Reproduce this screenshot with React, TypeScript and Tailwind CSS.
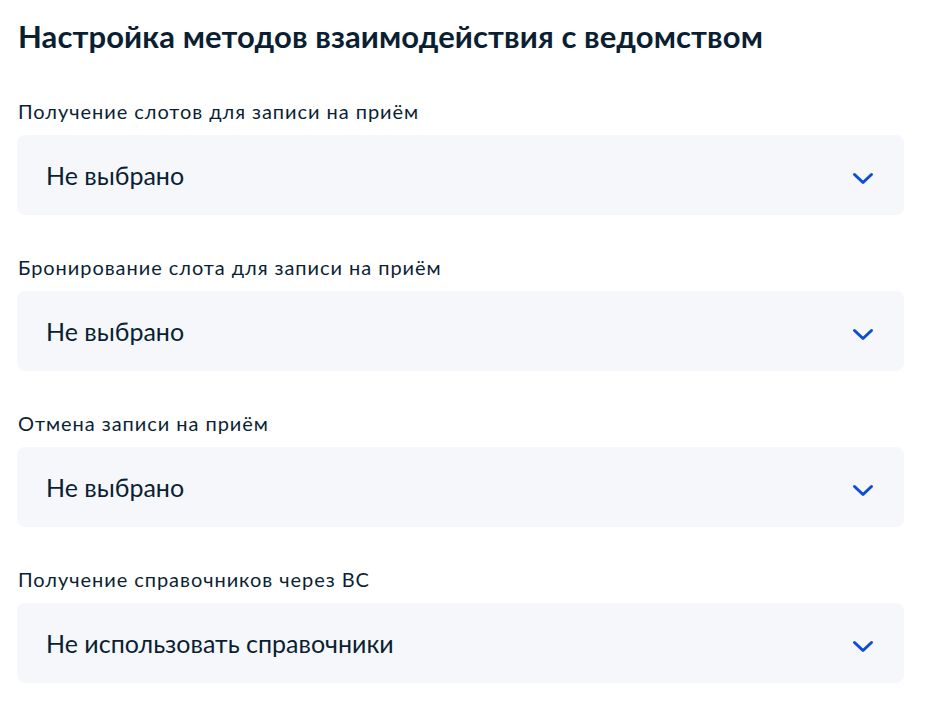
const fields = [
  { label: "Получение слотов для записи на приём", value: "Не выбрано" },
  { label: "Бронирование слота для записи на приём", value: "Не выбрано" },
  { label: "Отмена записи на приём", value: "Не выбрано" },
  { label: "Получение справочников через ВС", value: "Не использовать справочники" },
];

function Chevron() {
  return (
    <svg width="22" height="14" viewBox="0 0 22 14" fill="none">
      <path
        d="M2.5 2.5 L11 10.5 L19.5 2.5"
        stroke="#0d4cd3"
        strokeWidth="3"
        strokeLinecap="round"
        strokeLinejoin="round"
      />
    </svg>
  );
}

export default function App() {
  return (
    <div className="min-h-[708px] bg-white pl-[17px] pr-[30px] pt-[16px] text-[#0b1f33] font-['Lato',_'Noto_Sans',_sans-serif]">
      <h1 className="text-[31px] font-bold leading-[40px] tracking-[0.1px] pl-[1px]">
        Настройка методов взаимодействия с ведомством
      </h1>
      <div className="mt-[43px] flex flex-col gap-[40px]">
        {fields.map((f) => (
          <div key={f.label} className="flex flex-col">
            <label className="text-[20px] leading-[24px] tracking-[0.95px] pl-[1px] text-[#0b1f33]">
              {f.label}
            </label>
            <button className="mt-[12px] flex h-[80px] items-center justify-between rounded-[8px] bg-[#f5f7fa] pl-[29px] pr-[30px] text-left">
              <span className="text-[25px] leading-[30px] text-[#0b1f33]">
                {f.value}
              </span>
              <span className="mt-[8px]">
                <Chevron />
              </span>
            </button>
          </div>
        ))}
      </div>
    </div>
  );
}
